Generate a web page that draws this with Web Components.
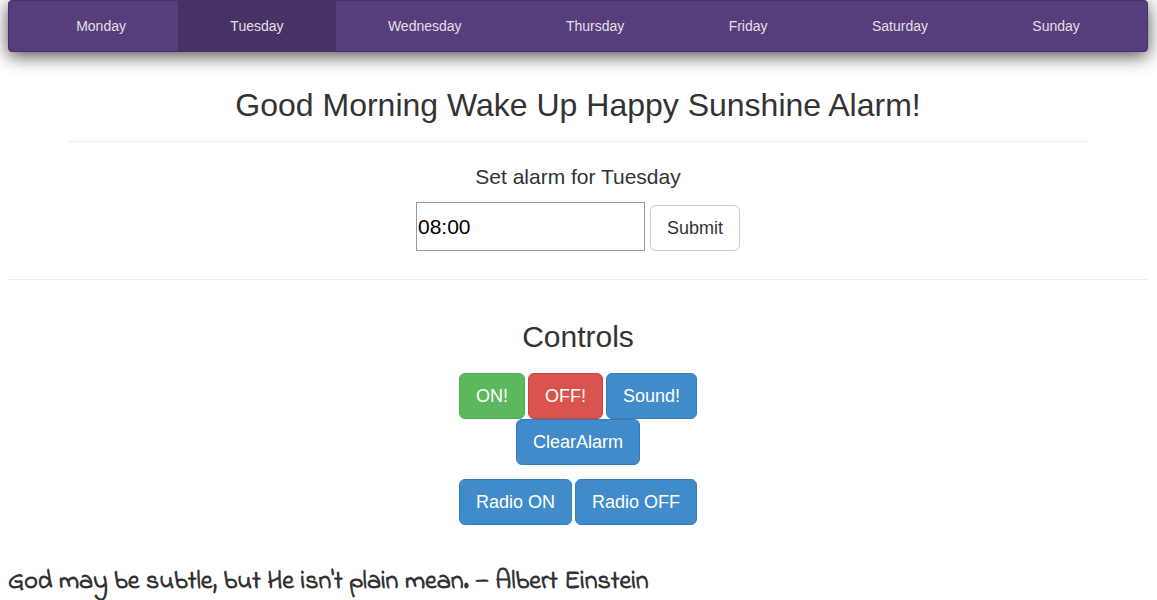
<!DOCTYPE html>
<html lang="en">
<head>
<meta charset="utf-8">
<title>Sunshine Alarm</title>
<style>
  body { margin: 0; background: #fff; color: #333; font: 14px/20px "Liberation Sans", Arial, sans-serif; }
</style>
</head>
<body>
<alarm-page></alarm-page>
<script>
class DayTabs extends HTMLElement {
  connectedCallback() {
    const days = ['Monday', 'Tuesday', 'Wednesday', 'Thursday', 'Friday', 'Saturday', 'Sunday'];
    const active = this.getAttribute('active');
    this.attachShadow({ mode: 'open' }).innerHTML = `
      <style>
        :host { display: block; }
        nav { background: #563d7c; border: 1px solid #463265; border-radius: 4px; padding: 0 15px; box-shadow: 0 4px 18px rgba(0,0,0,.7); }
        ul { display: flex; list-style: none; margin: 0; padding: 0; }
        li { flex: 1 0 auto; }
        a { display: block; padding: 15px 0; text-align: center; color: #e3e0e6; text-decoration: none; }
        a[aria-current] { background: #463265; }
      </style>
      <nav aria-label="Days"><ul>${days.map(d =>
        `<li><a href="#${d}"${d === active ? ' aria-current="page"' : ''}>${d}</a></li>`).join('')}</ul></nav>`;
  }
}

class AppButton extends HTMLElement {
  connectedCallback() {
    this.attachShadow({ mode: 'open' }).innerHTML = `
      <style>
        :host { display: block; --fill: #428bca; --edge: #357ebd; --ink: #fff; }
        :host([kind="success"]) { --fill: #5cb85c; --edge: #4cae4c; }
        :host([kind="danger"]) { --fill: #d9534f; --edge: #d43f3a; }
        :host([kind="plain"]) { --fill: #fff; --edge: #ccc; --ink: #333; }
        button { display: block; margin: 0; padding: 10px 16px; font: inherit; font-size: 18px; line-height: 24px;
          color: var(--ink); background: var(--fill); border: 1px solid var(--edge); border-radius: 6px; cursor: pointer; }
      </style>
      <button type="button"><slot></slot></button>`;
  }
}

class AlarmForm extends HTMLElement {
  connectedCallback() {
    this.attachShadow({ mode: 'open' }).innerHTML = `
      <style>
        :host { display: block; }
        form { display: flex; flex-direction: column; align-items: center; gap: 10px; }
        label { font-size: 21px; line-height: 30px; }
        .row { display: flex; align-items: flex-end; gap: 5px; }
        input { box-sizing: border-box; width: 229px; height: 49px; margin: 0; padding: 1px; border: 1px solid #999;
          border-radius: 0; background: #fff; color: #000; font: inherit; font-size: 21px; }
      </style>
      <form>
        <label for="time">Set alarm for ${this.getAttribute('day')}</label>
        <div class="row"><input id="time" type="text" value="08:00"><app-button kind="plain">Submit</app-button></div>
      </form>`;
  }
}

class ControlPanel extends HTMLElement {
  connectedCallback() {
    this.attachShadow({ mode: 'open' }).innerHTML = `
      <style>
        :host { display: flex; flex-direction: column; align-items: center; }
        h2 { margin: 0 0 20px; font-size: 30px; line-height: 33px; font-weight: 500; }
        .row { display: flex; gap: 3px; }
        .radio { margin-top: 14px; }
      </style>
      <h2>Controls</h2>
      <div class="row">
        <app-button kind="success">ON!</app-button>
        <app-button kind="danger">OFF!</app-button>
        <app-button>Sound!</app-button>
      </div>
      <div class="row"><app-button>ClearAlarm</app-button></div>
      <div class="row radio">
        <app-button>Radio ON</app-button>
        <app-button>Radio OFF</app-button>
      </div>`;
  }
}

class DailyQuote extends HTMLElement {
  connectedCallback() {
    this.attachShadow({ mode: 'open' }).innerHTML = `
      <style>
        :host { display: block; }
        p { margin: 0; font-family: "Indie Flower", cursive; font-size: 26px; line-height: 30px; font-weight: 700; }
      </style>
      <p><slot></slot></p>`;
  }
}

class AlarmPage extends HTMLElement {
  connectedCallback() {
    this.attachShadow({ mode: 'open' }).innerHTML = `
      <style>
        :host { display: block; box-sizing: border-box; min-height: 100vh; padding: 0 9px 0 8px; }
        header { margin: 0 60px; padding: 35px 0 18px; border-bottom: 1px solid #eee; text-align: center; }
        h1 { margin: 0; font-size: 32px; line-height: 36px; font-weight: 500; }
        alarm-form { margin-top: 20px; }
        hr { margin: 28px 0 40px; border: 0; border-top: 1px solid #eee; }
        daily-quote { margin-top: 42px; }
      </style>
      <day-tabs active="Tuesday"></day-tabs>
      <main>
        <header><h1>Good Morning Wake Up Happy Sunshine Alarm!</h1></header>
        <alarm-form day="Tuesday"></alarm-form>
        <hr>
        <control-panel></control-panel>
        <daily-quote>God may be subtle, but He isn't plain mean. — Albert Einstein</daily-quote>
      </main>`;
  }
}

customElements.define('day-tabs', DayTabs);
customElements.define('app-button', AppButton);
customElements.define('alarm-form', AlarmForm);
customElements.define('control-panel', ControlPanel);
customElements.define('daily-quote', DailyQuote);
customElements.define('alarm-page', AlarmPage);
</script>
</body>
</html>
